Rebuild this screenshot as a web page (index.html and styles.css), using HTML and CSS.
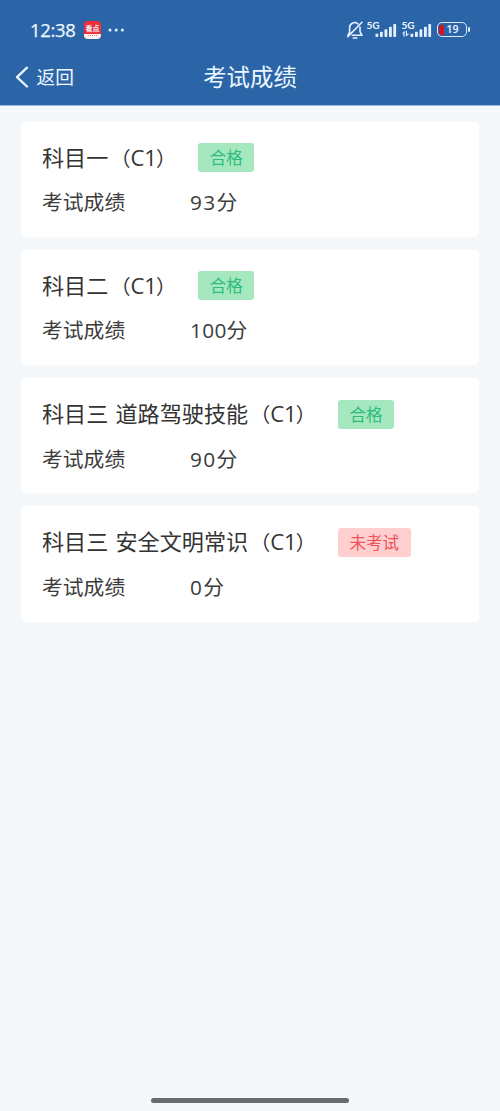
FILE: index.html
```
<!DOCTYPE html>
<html lang="zh-CN">
<head>
<meta charset="utf-8">
<title>考试成绩</title>
<link rel="stylesheet" href="styles.css">
</head>
<body>
<div class="screen">
  <header class="header">
    <div class="status">
      <span class="clock">12:38</span>
      <span class="app">
        <span class="app-name">看点</span>
        <span class="app-foot"></span>
      </span>
      <svg class="dots" width="17" height="4" viewBox="0 0 17 4" fill="#e6f3ff"><circle cx="2" cy="2" r="1.5"/><circle cx="8.2" cy="2" r="1.5"/><circle cx="14.4" cy="2" r="1.5"/></svg>
      <svg class="bell" width="18" height="20" viewBox="0 0 18 20" fill="none" stroke="#e3f2ff" stroke-width="1.6" stroke-linecap="round" stroke-linejoin="round"><path d="M3.6 12.2V8a5 5 0 0 1 8.2-4.2M14 7v4.6l2 3.7H6.2M1.8 15.3l1.8-3M16 2.2 1.8 16.6M7.2 18h3.6"/></svg>
      <span class="signal">
        <span class="net">5G</span>
        <svg width="30" height="20" viewBox="0 0 30 20" fill="#e3f2ff"><rect x="8.5" y="13.8" width="2.8" height="3.2" rx=".8"/><rect x="13" y="11.8" width="2.8" height="5.2" rx=".8"/><rect x="17.5" y="9.2" width="2.8" height="7.8" rx=".8"/><rect x="22" y="6.8" width="2.8" height="10.2" rx=".8"/><rect x="26.3" y="4" width="2.8" height="13" rx=".8"/></svg>
      </span>
      <span class="signal second">
        <span class="net">5G</span>
        <svg width="30" height="20" viewBox="0 0 30 20" fill="#e3f2ff"><path d="M0 13.6 2.6 10.8V16.5H1.4V13.6zM3.8 10.8h1.2v2.9h2.4L3.8 16.8z"/><rect x="8.5" y="13.8" width="2.8" height="3.2" rx=".8"/><rect x="13" y="11.8" width="2.8" height="5.2" rx=".8"/><rect x="17.5" y="9.2" width="2.8" height="7.8" rx=".8"/><rect x="22" y="6.8" width="2.8" height="10.2" rx=".8"/><rect x="26.3" y="4" width="2.8" height="13" rx=".8"/></svg>
      </span>
      <span class="battery"><span class="level"></span><span class="percent">19</span></span>
      <span class="battery-tip"></span>
    </div>
    <nav class="nav">
      <a class="back">
        <svg width="14" height="22" viewBox="0 0 14 22" fill="none" stroke="#e9f6ff" stroke-width="2.3" stroke-linecap="round" stroke-linejoin="round"><path d="M12 1.7 2 11.2 12 20.5"/></svg>
        <span>返回</span>
      </a>
      <h1 class="title">考试成绩</h1>
    </nav>
  </header>
  <main class="list">
    <section class="card">
      <div class="subject"><h2 class="name">科目一<span class="open">（</span>C1<span class="close">）</span></h2><span class="tag pass">合格</span></div>
      <div class="score"><span class="label">考试成绩</span><span><span class="num">93</span>分</span></div>
    </section>
    <section class="card">
      <div class="subject"><h2 class="name">科目二<span class="open">（</span>C1<span class="close">）</span></h2><span class="tag pass">合格</span></div>
      <div class="score"><span class="label">考试成绩</span><span><span class="num full">100</span>分</span></div>
    </section>
    <section class="card">
      <div class="subject"><h2 class="name">科目三 道路驾驶技能<span class="open">（</span>C1<span class="close">）</span></h2><span class="tag pass">合格</span></div>
      <div class="score"><span class="label">考试成绩</span><span><span class="num">90</span>分</span></div>
    </section>
    <section class="card">
      <div class="subject"><h2 class="name">科目三 安全文明常识<span class="open">（</span>C1<span class="close">）</span></h2><span class="tag none">未考试</span></div>
      <div class="score"><span class="label">考试成绩</span><span><span class="num">0</span>分</span></div>
    </section>
  </main>
  <div class="home-bar"></div>
</div>
</body>
</html>
```
FILE: styles.css
```
* { box-sizing: border-box; }
body {
  margin: 0;
  background: #f4f8fa;
  color: #333;
  font-family: "Open Sans", "Noto Sans CJK SC", sans-serif;
}
.screen {
  display: flex;
  flex-direction: column;
  height: 1111px;
}
.header {
  height: 106px;
  border-bottom: 1px solid #9dbbdb;
  background: #2b65a8;
  color: #ecf7ff;
}
.status {
  display: flex;
  align-items: center;
  height: 48px;
  padding: 11px 31.5px 0 30px;
}
.clock {
  width: 45px;
  margin-right: 9px;
  font: 500 18.4px/20px "Open Sans", sans-serif;
  letter-spacing: -.3px;
  white-space: nowrap;
  -webkit-text-stroke: .25px;
}
.app {
  display: flex;
  flex-direction: column;
  justify-content: space-between;
  width: 17px;
  height: 18px;
  overflow: hidden;
  border-radius: 4px;
  background: #f02c38;
}
.app-name {
  height: 13px;
  font: bold 7px/14px "Noto Sans CJK SC", sans-serif;
  text-align: center;
}
.app-foot {
  height: 5px;
  background: #fff3f1;
}
.app-foot::before {
  display: block;
  width: 9px;
  margin: 1px auto 0;
  border-top: 1px dotted #e98686;
  content: "";
}
.dots { margin-left: 7px; }
.bell {
  margin-right: 1px;
  margin-left: auto;
}
.signal {
  position: relative;
  width: 30px;
  height: 20px;
  margin-left: 2px;
}
.signal svg { display: block; }
.second { margin-left: 5px; }
.net {
  position: absolute;
  top: 0;
  left: 0;
  font: 700 10px/10px Lato, sans-serif;
}
.battery {
  display: flex;
  align-items: center;
  width: 30px;
  height: 15px;
  margin-left: 5px;
  padding: 1px;
  border: 1.5px solid #d7eaff;
  border-radius: 5px;
}
.level {
  width: 5px;
  height: 10px;
  border-radius: 2px 0 0 2px;
  background: #d21427;
}
.percent {
  margin-left: 3px;
  font: 600 10.5px/11px "Open Sans", sans-serif;
}
.battery-tip {
  width: 2px;
  height: 5px;
  margin: 0 -1px 0 1px;
  border-radius: 1px;
  background: #d7eaff;
}
.nav {
  display: grid;
  grid-template-columns: 1fr auto 1fr;
  align-items: center;
  height: 57px;
  padding: 0 15px;
}
.back {
  display: flex;
  align-items: center;
  gap: 7.5px;
  font-size: 18.7px;
  line-height: 28px;
}
.title {
  margin: 0;
  font-size: 23.4px;
  font-weight: 400;
  line-height: 34px;
}
.list {
  display: flex;
  flex-direction: column;
  gap: 13px;
  padding: 15.5px 21px 0;
}
.card {
  height: 115.25px;
  padding: 21.5px 21px 0;
  border-radius: 5px;
  background: #fff;
}
.subject {
  display: flex;
  align-items: center;
  height: 29px;
}
.name {
  margin: 0 19.3px 1px 0;
  font-size: 22.1px;
  font-weight: 400;
  line-height: 29px;
  white-space: nowrap;
  word-spacing: 1.5px;
}
.open, .close {
  display: inline-block;
  width: 22.1px;
  font-size: 20px;
  line-height: 22px;
}
.open { text-align: right; }
.close {
  margin-left: -1px;
  margin-right: 1px;
}
.tag {
  height: 29px;
  padding: 0 11.3px;
  border-radius: 3px;
  font-size: 16.6px;
  line-height: 29px;
}
.pass {
  background: #a5e8bf;
  color: #2dbc7c;
}
.none {
  background: #ffcfcf;
  color: #ec5358;
}
.score {
  display: flex;
  margin-top: 15px;
  color: #3c3c3c;
  font-size: 20.8px;
  line-height: 30px;
}
.label { width: 148px; }
.num { letter-spacing: 1.3px; }
.full { letter-spacing: .3px; }
.home-bar {
  width: 198px;
  height: 5px;
  margin: auto auto 8px;
  border-radius: 3px;
  background: #676c70;
}
```
